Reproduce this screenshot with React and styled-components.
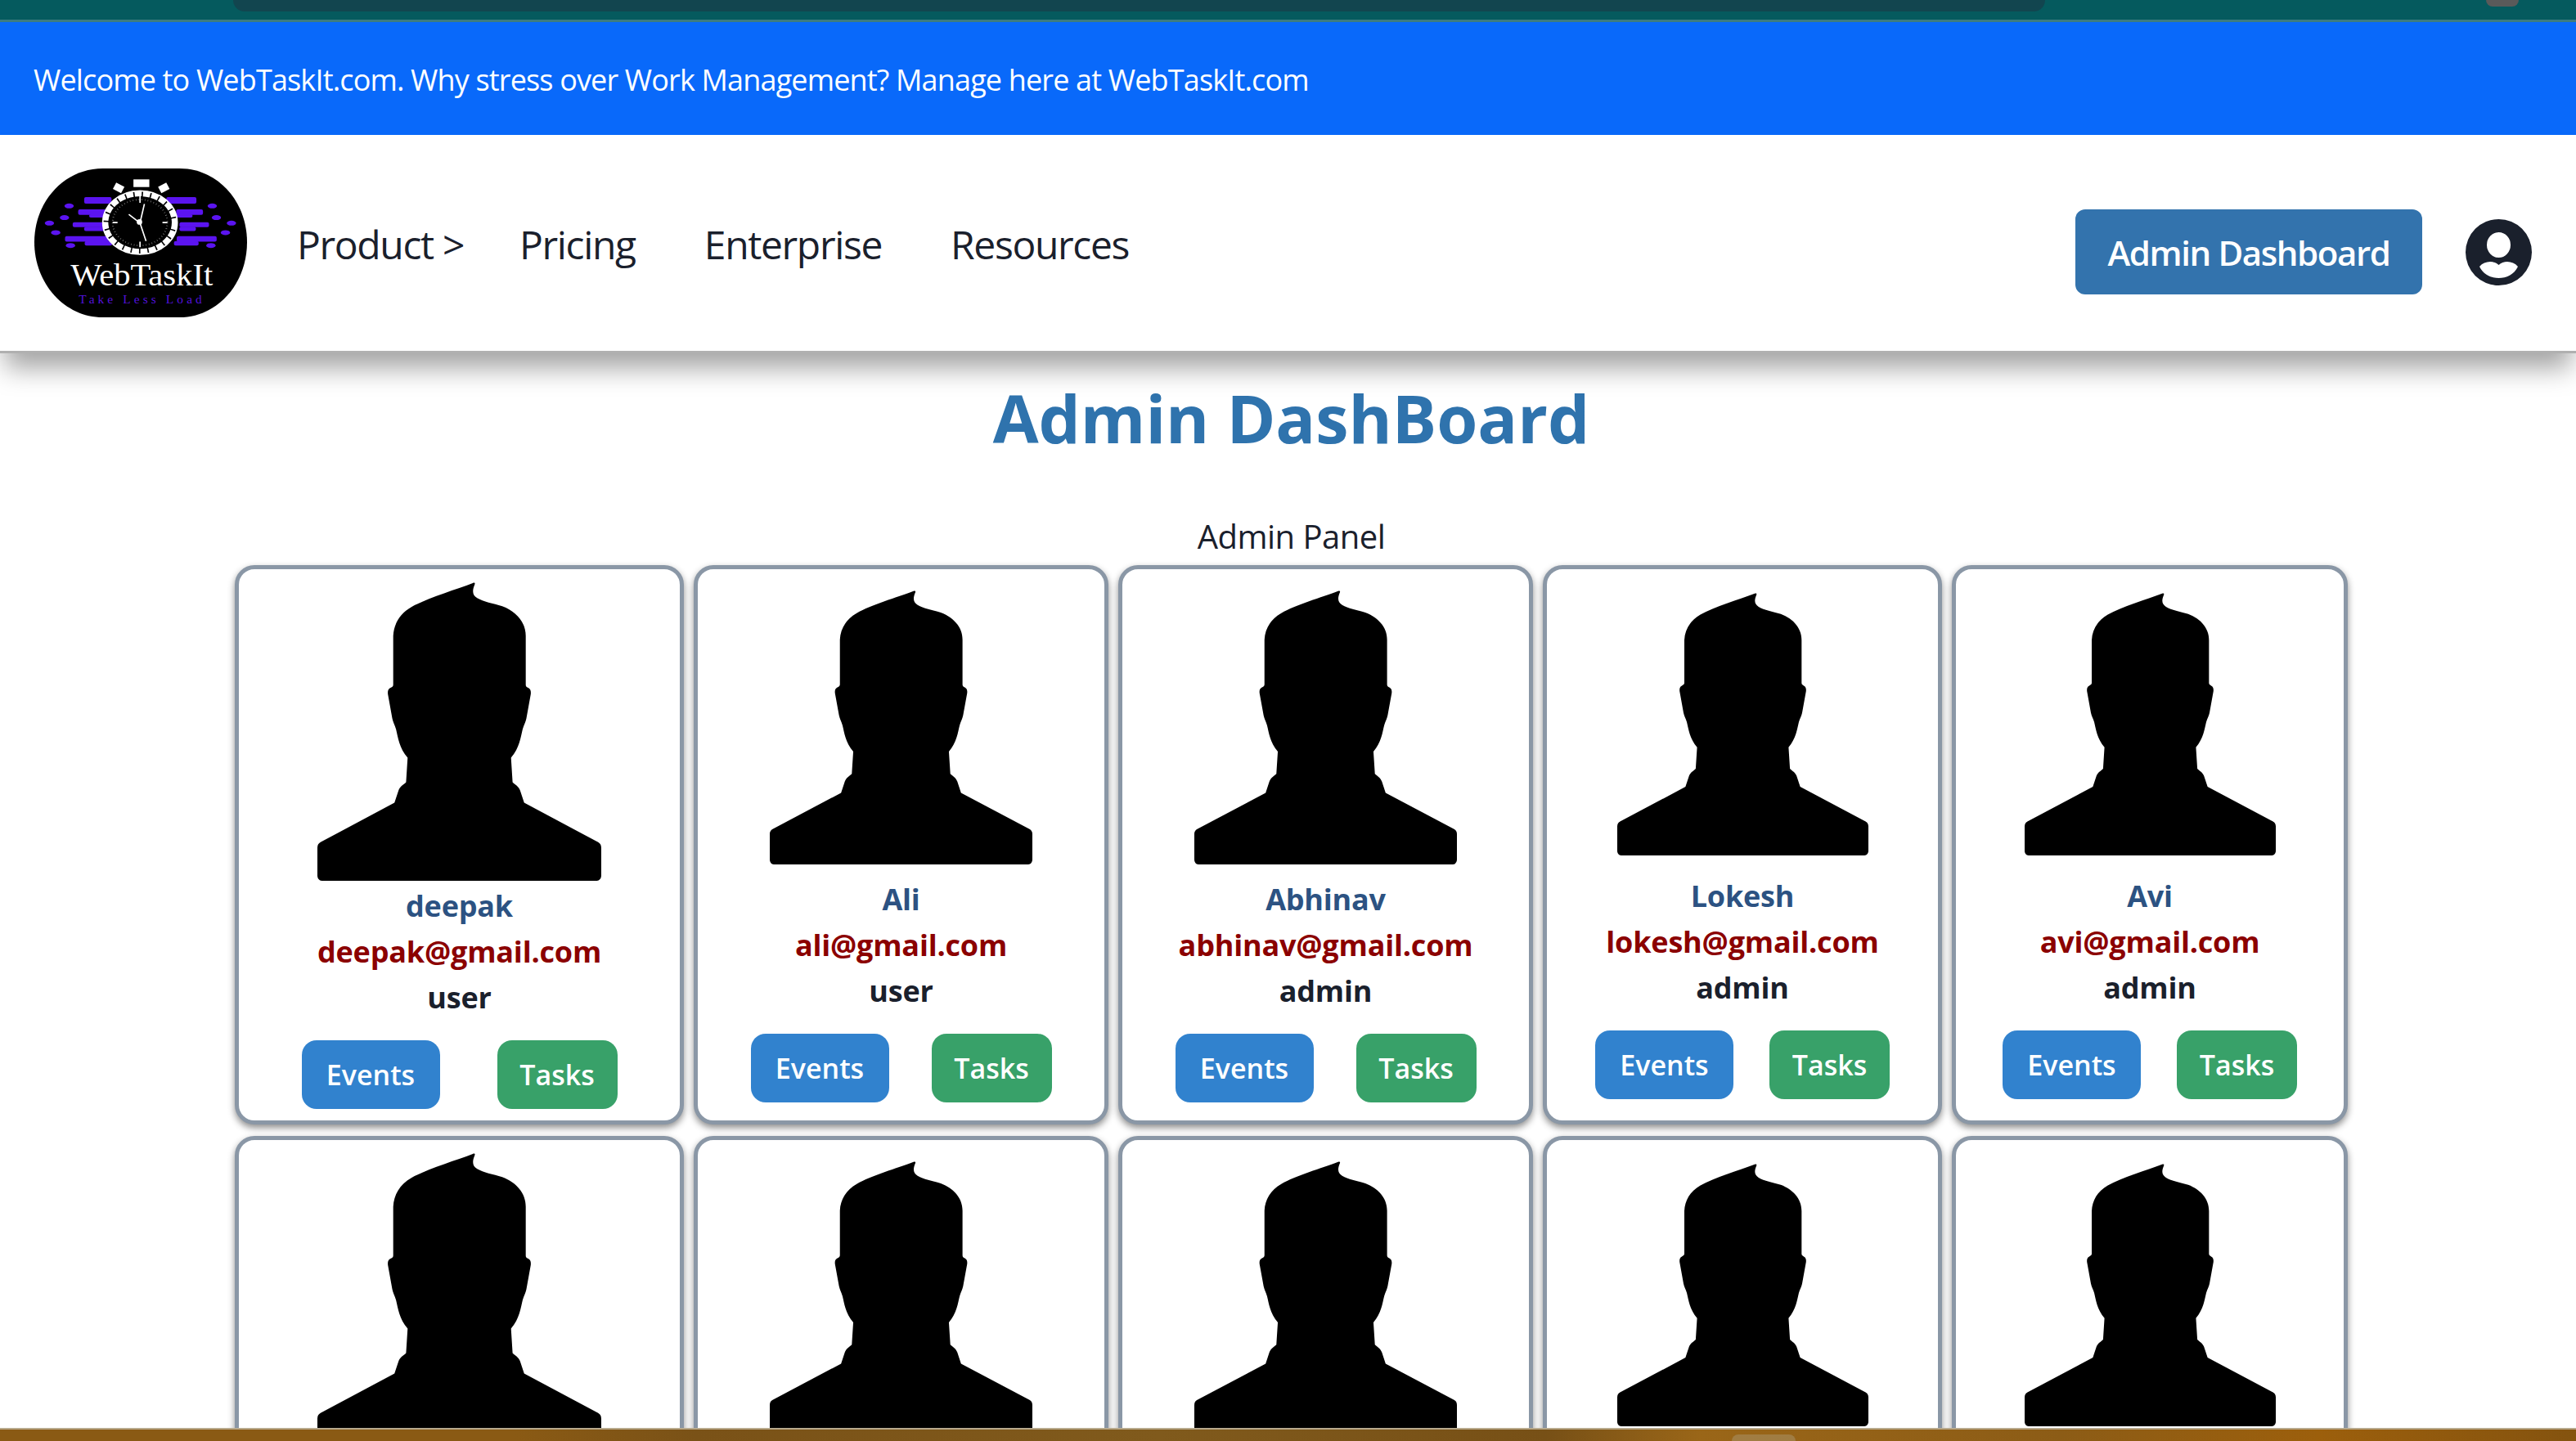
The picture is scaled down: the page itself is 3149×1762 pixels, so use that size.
import styled, { createGlobalStyle } from "styled-components";

const GlobalStyle = createGlobalStyle`
  html, body {
    margin: 0;
    padding: 0;
    height: 100%;
    overflow: hidden;
    background: #ffffff;
    color: #1a202c;
    font-family: "Open Sans", "Noto Sans", sans-serif;
  }
  * { box-sizing: border-box; }
`;

const BrowserStrip = styled.div`
  height: 27px;
  background: #055a5e;
  border-bottom: 3px solid #3d7c7f;
  display: flex;
  justify-content: space-between;
  padding: 0 70px 0 285px;
`;

const AddressPill = styled.div`
  width: 2215px;
  height: 14px;
  background: #12454f;
  border-radius: 0 0 24px 24px;
`;

const Avatar = styled.div`
  width: 40px;
  height: 8px;
  background: #5a5a5a;
  border-radius: 0 0 20px 20px;
`;

const Banner = styled.div`
  height: 138px;
  background: #0969fa;
  color: #ffffff;
  font-size: 36px;
  display: flex;
  align-items: center;
  padding: 2px 41px 0;
  letter-spacing: -0.84px;
`;

const NavBar = styled.header`
  position: relative;
  height: 267px;
  background: #ffffff;
  border-bottom: 3px solid #b0b0b0;
  box-shadow: 0 24px 30px -6px rgba(0, 0, 0, 0.36);
  display: flex;
  align-items: center;
  padding: 0 54px 0 42px;
`;

const NavLinks = styled.nav`
  display: flex;
  gap: 84px;
  margin-left: 61px;
  margin-top: 2px;
  flex: 1;
`;

const NavLink = styled.a`
  font-size: 48px;
  font-weight: 500;
  color: #1a202c;
  letter-spacing: -1.35px;
  margin-right: ${(p) => p.$pull || 0}px;
`;

const DashButton = styled.button`
  width: 424px;
  height: 104px;
  border: none;
  border-radius: 12px;
  background: #3373ad;
  color: #ffffff;
  font-family: inherit;
  font-size: 42px;
  font-weight: 600;
  letter-spacing: -1.4px;
  margin-right: 53px;
  margin-top: 22px;
`;

const ProfileSlot = styled.div`
  margin-top: 22px;
  display: flex;
`;

const Main = styled.main`
  display: flex;
  flex-direction: column;
  align-items: center;
  padding-left: 8px;
`;

const Title = styled.h1`
  margin: 29px 0 0;
  font-size: 81px;
  line-height: 100px;
  font-weight: 700;
  color: #2f73ad;
`;

const Subtitle = styled.div`
  margin: 67px 0 7px;
  font-size: 40px;
  line-height: 56px;
  letter-spacing: -0.5px;
  color: #1a202c;
`;

const CardRow = styled.div`
  display: flex;
  gap: 12px;
  margin-bottom: 14px;
  width: 100%;
  padding-left: 279px;
`;

const Card = styled.div`
  width: ${(p) => p.$width}px;
  min-height: 684px;
  flex: none;
  background: #ffffff;
  border: 5px solid #8a97a6;
  border-radius: 24px;
  box-shadow: 0 4px 8px rgba(0, 0, 0, 0.45);
  padding-top: ${(p) => p.$top}px;
  display: flex;
  flex-direction: column;
  align-items: center;
`;

const Silhouette = styled.svg`
  display: block;
  width: ${(p) => p.$w}px;
  height: ${(p) => p.$h}px;
  margin-bottom: ${(p) => p.$gap}px;
  flex: none;
`;

const Line = styled.div`
  font-size: 36px;
  line-height: 56px;
  font-weight: 700;
  letter-spacing: -0.2px;
  color: ${(p) => p.$color};
`;

const Actions = styled.div`
  display: flex;
  justify-content: center;
  gap: ${(p) => p.$gap}px;
  margin-top: 24px;
`;

const ActionButton = styled.button`
  width: ${(p) => p.$width}px;
  height: 84px;
  border: none;
  border-radius: 18px;
  background: ${(p) => p.$bg};
  color: #ffffff;
  font-family: inherit;
  font-size: 34px;
  font-weight: 600;
`;

const BottomBar = styled.div`
  position: fixed;
  left: 0;
  right: 0;
  bottom: 0;
  height: 16px;
  border-top: 2px solid #b8a98c;
  padding-left: 2117px;
  background: linear-gradient(90deg, #8a5a14 0%, #8a5a14 20%, #7a5217 27%, #805a1c 45%, #775016 60%, #9a6618 66%, #8c5c16 80%, #9c5f0c 90%, #84530f 100%);
`;

const BarIcon = styled.div`
  width: 78px;
  height: 8px;
  margin-top: 6px;
  background: rgba(170, 150, 110, 0.5);
  border-radius: 10px 10px 0 0;
`;

function PersonShape({ w, h, gap }) {
  return (
    <Silhouette $w={w} $h={h} $gap={gap} viewBox="0 0 906 796" preserveAspectRatio="none">
      <path
        fill="#000"
        d="M242 143 C244 112 262 84 300 66 C350 42 440 20 496 2 C502 0 504 2 502 6 C494 22 494 34 510 42 C530 52 560 56 590 64 C634 78 665 106 665 143 V273 C665 278 668 279 674 282 C680 285 682 290 681 298 L667 363 C665 372 659 380 655 392 C649 412 645 442 618 468 L623 533 C632 540 642 544 647 555 L660 588 L896 693 C902 696 906 700 906 708 V782 C906 790 900 796 892 796 H14 C6 796 0 790 0 782 V708 C0 700 4 696 10 693 L246 588 L259 555 C264 544 274 540 283 533 L288 468 C261 442 257 412 251 392 C247 380 241 372 239 363 L225 298 C224 290 226 285 232 282 C238 279 242 278 242 273 Z"
      />
    </Silhouette>
  );
}

function Logo() {
  const bars = [
    [182, 105, 100, 24], [482, 105, 110, 24],
    [160, 150, 130, 20], [200, 168, 90, 12], [518, 150, 98, 20], [518, 168, 60, 12],
    [140, 197, 120, 18], [182, 213, 80, 16], [530, 197, 108, 18], [530, 213, 60, 16],
    [112, 248, 160, 20], [184, 266, 100, 16], [520, 248, 146, 20], [510, 266, 90, 16],
  ];
  const dots = [
    [127, 137], [110, 180], [55, 200], [78, 235], [132, 282],
    [650, 137], [665, 180], [720, 200], [698, 235], [645, 282],
  ];
  return (
    <svg width="260" height="182" viewBox="0 0 777 545" preserveAspectRatio="none">
      <path fill="#000" d="M250 0 H530 C670 0 777 120 777 270 C777 420 670 545 530 545 H250 C110 545 0 420 0 270 C0 120 110 0 250 0 Z" />
      {bars.map(([x, y, w, h], i) => (
        <rect key={i} x={x} y={y} width={w} height={h} rx="6" fill="#5b14f0" />
      ))}
      {dots.map(([x, y], i) => (
        <ellipse key={i} cx={x} cy={y} rx="17" ry="9" fill="#5b14f0" />
      ))}
      <ellipse cx="386" cy="198" rx="134" ry="114" fill="#000" />
      <ellipse cx="386" cy="198" rx="126" ry="106" fill="none" stroke="#fff" strokeWidth="20" strokeDasharray="26 5" />
      <ellipse cx="386" cy="198" rx="136" ry="116" fill="none" stroke="#fff" strokeWidth="5" />
      <ellipse cx="386" cy="198" rx="100" ry="84" fill="none" stroke="#888" strokeWidth="6" strokeDasharray="2 9" />
      <rect x="362" y="40" width="58" height="28" fill="#fff" />
      <rect x="291" y="58" width="34" height="26" fill="#fff" transform="rotate(28 308 71)" />
      <rect x="456" y="58" width="34" height="26" fill="#fff" transform="rotate(-28 473 71)" />
      <path d="M386 88 V126 M388 190 L402 130 M380 195 L345 168 M386 200 L408 266 M286 198 H304 M468 198 H486 M386 268 V288" stroke="#fff" strokeWidth="5" fill="none" />
      <circle cx="384" cy="196" r="10" fill="#fff" />
      <text x="132" y="428" fill="#fff" fontFamily="'Liberation Serif', serif" fontSize="116" textLength="520" lengthAdjust="spacingAndGlyphs">WebTaskIt</text>
      <text x="162" y="495" fill="#5212dc" fontFamily="'Liberation Serif', serif" fontSize="46" textLength="450">Take Less Load</text>
    </svg>
  );
}

function ProfileIcon() {
  return (
    <svg width="81" height="81" viewBox="0 0 81 81">
      <path
        fillRule="evenodd"
        fill="#1a202c"
        d="M40.5 0 A40.5 40.5 0 1 1 40.5 81 A40.5 40.5 0 1 1 40.5 0 Z M40.5 16 A14.5 15.5 0 1 0 40.5 47 A14.5 15.5 0 1 0 40.5 16 Z M40.5 56 C34 50 23 51 17 58 C22 68 31 72 40.5 72 C50 72 59 68 64 58 C58 51 47 50 40.5 56 Z"
      />
    </svg>
  );
}

const users = [
  { name: "deepak", email: "deepak@gmail.com", role: "user", width: 549, top: 16, w: 347, h: 365, gap: 3, actionGap: 70 },
  { name: "Ali", email: "ali@gmail.com", role: "user", width: 507, top: 26, w: 321, h: 335, gap: 15, actionGap: 52 },
  { name: "Abhinav", email: "abhinav@gmail.com", role: "admin", width: 507, top: 26, w: 321, h: 335, gap: 15, actionGap: 52 },
  { name: "Lokesh", email: "lokesh@gmail.com", role: "admin", width: 488, top: 29, w: 307, h: 321, gap: 22, actionGap: 44 },
  { name: "Avi", email: "avi@gmail.com", role: "admin", width: 484, top: 29, w: 307, h: 321, gap: 22, actionGap: 44 },
];

export default function App() {
  return (
    <>
      <GlobalStyle />
      <BrowserStrip>
        <AddressPill />
        <Avatar />
      </BrowserStrip>
      <Banner>Welcome to WebTaskIt.com. Why stress over Work Management? Manage here at WebTaskIt.com</Banner>
      <NavBar>
        <Logo />
        <NavLinks>
          <NavLink $pull={-16}>Product &gt;</NavLink>
          <NavLink>Pricing</NavLink>
          <NavLink>Enterprise</NavLink>
          <NavLink>Resources</NavLink>
        </NavLinks>
        <DashButton>Admin Dashboard</DashButton>
        <ProfileSlot>
          <ProfileIcon />
        </ProfileSlot>
      </NavBar>
      <Main>
        <Title>Admin DashBoard</Title>
        <Subtitle>Admin Panel</Subtitle>
        <CardRow>
          {users.map((u) => (
            <Card key={u.name} $width={u.width} $top={u.top}>
              <PersonShape w={u.w} h={u.h} gap={u.gap} />
              <Line $color="#2c5282">{u.name}</Line>
              <Line $color="#8b0000">{u.email}</Line>
              <Line $color="#1a202c">{u.role}</Line>
              <Actions $gap={u.actionGap}>
                <ActionButton $width={169} $bg="#3182ce">Events</ActionButton>
                <ActionButton $width={147} $bg="#38a169">Tasks</ActionButton>
              </Actions>
            </Card>
          ))}
        </CardRow>
        <CardRow>
          {users.map((u) => (
            <Card key={u.name} $width={u.width} $top={u.top}>
              <PersonShape w={u.w} h={u.h} gap={u.gap} />
            </Card>
          ))}
        </CardRow>
      </Main>
      <BottomBar>
        <BarIcon />
      </BottomBar>
    </>
  );
}
